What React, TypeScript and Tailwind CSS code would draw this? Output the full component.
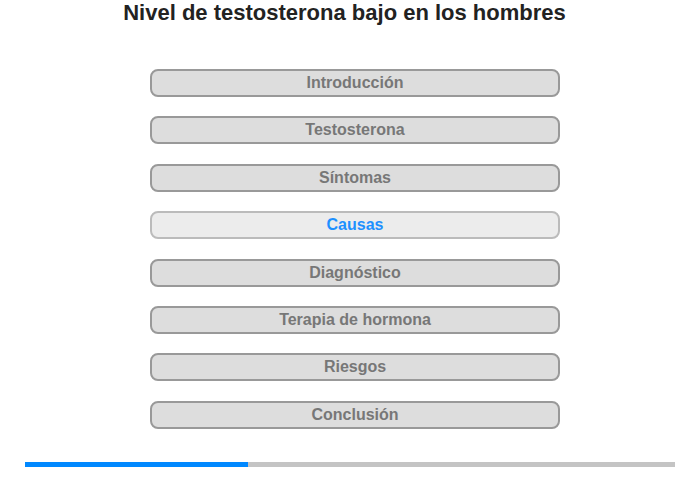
const sections = [
  "Introducción",
  "Testosterona",
  "Síntomas",
  "Causas",
  "Diagnóstico",
  "Terapia de hormona",
  "Riesgos",
  "Conclusión",
];

const active = 3;

export default function App() {
  return (
    <div className="w-[700px] h-[480px] bg-white font-['Liberation_Sans',Arial,sans-serif]">
      <h1 className="pt-[1px] pr-[11px] text-center text-[22px] leading-[24px] font-bold text-[#222]">
        Nivel de testosterona bajo en los hombres
      </h1>

      <div className="mt-[44px] ml-[150px] w-[410px] flex flex-col gap-[19.4px]">
        {sections.map((s, i) => (
          <div
            key={s}
            className={
              i === active
                ? "h-[28px] flex items-center justify-center rounded-[8px] border-2 border-[#bbb] bg-[#ececec] text-[16px] font-bold text-[#1e90ff]"
                : "h-[28px] flex items-center justify-center rounded-[8px] border-2 border-[#999] bg-[#ddd] text-[16px] font-bold text-[#777]"
            }
          >
            {s}
          </div>
        ))}
      </div>

      <div className="mt-[33px] ml-[25px] w-[650px] h-[5px] bg-[#c4c4c4] flex">
        <div className="w-[223px] h-full bg-[#0088ff]" />
      </div>
    </div>
  );
}
